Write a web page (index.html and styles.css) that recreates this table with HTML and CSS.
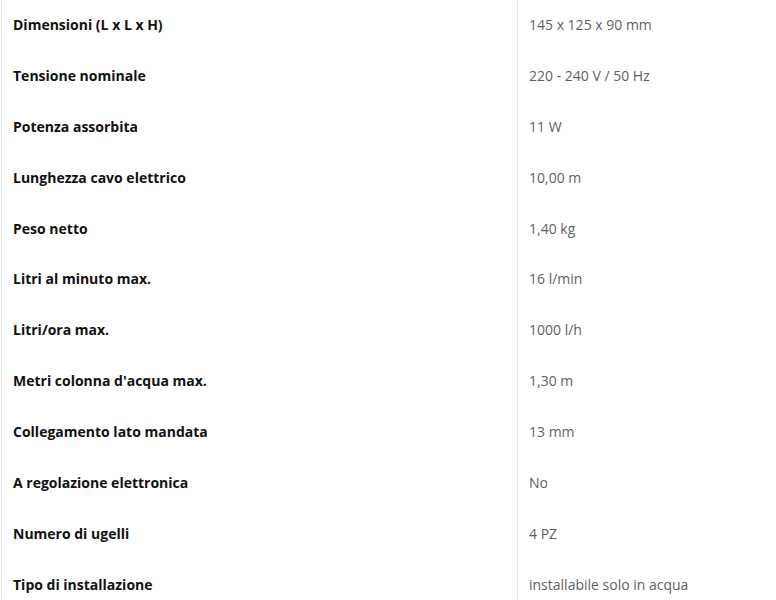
FILE: index.html
```html
<!DOCTYPE html>
<html lang="it">
<head>
<meta charset="utf-8">
<link rel="stylesheet" href="styles.css">
</head>
<body>
<div class="specs">
  <div class="label">Dimensioni (L x L x H)</div><div class="value">145 x 125 x 90 mm</div>
  <div class="label">Tensione nominale</div><div class="value">220 - 240 V / 50 Hz</div>
  <div class="label">Potenza assorbita</div><div class="value">11 W</div>
  <div class="label">Lunghezza cavo elettrico</div><div class="value">10,00 m</div>
  <div class="label">Peso netto</div><div class="value">1,40 kg</div>
  <div class="label">Litri al minuto max.</div><div class="value">16 l/min</div>
  <div class="label">Litri/ora max.</div><div class="value">1000 l/h</div>
  <div class="label">Metri colonna d'acqua max.</div><div class="value">1,30 m</div>
  <div class="label">Collegamento lato mandata</div><div class="value">13 mm</div>
  <div class="label">A regolazione elettronica</div><div class="value">No</div>
  <div class="label">Numero di ugelli</div><div class="value">4 PZ</div>
  <div class="label">Tipo di installazione</div><div class="value">installabile solo in acqua</div>
</div>
</body>
</html>
```
FILE: styles.css
```css
html, body {
  margin: 0;
  padding: 0;
  background: #fff;
}
body {
  font-family: "Open Sans", "Liberation Sans", sans-serif;
  font-size: 14px;
  line-height: 20px;
  overflow: hidden;
}
.specs {
  display: grid;
  grid-template-columns: 515px 1fr;
  margin-left: 1px;
  border-left: 1px solid #e6e6e6;
}
.label, .value {
  padding: 15px 12px 15.9px 11px;
}
.label {
  font-weight: 700;
  color: #111;
}
.value {
  color: #5f5f5f;
  border-left: 1px solid #e6e6e6;
}
```
